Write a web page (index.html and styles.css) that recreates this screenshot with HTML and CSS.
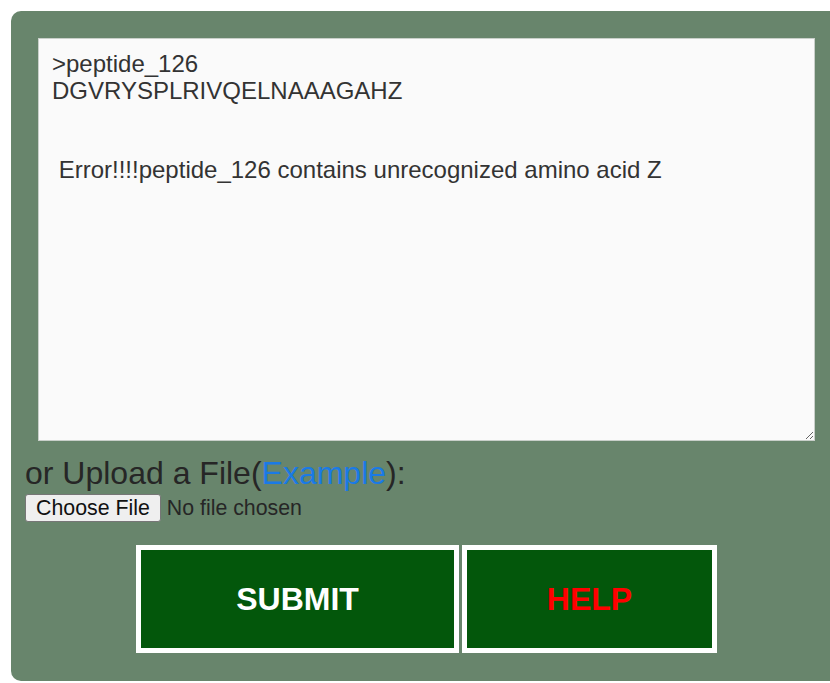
FILE: index.html
```html
<!DOCTYPE html>
<html lang="en">
<head>
<meta charset="utf-8">
<title>Peptide input</title>
<link rel="stylesheet" href="styles.css">
</head>
<body>
<form class="panel">
<textarea class="seq-input" spellcheck="false">&gt;peptide_126
DGVRYSPLRIVQELNAAAGAHZ


 Error!!!!peptide_126 contains unrecognized amino acid Z</textarea>
<div class="upload-label">or Upload a File(<a class="example-link" href="#">Example</a>):</div>
<input class="file-input" type="file">
<div class="actions">
<button class="action-btn submit-btn" type="button">SUBMIT</button>
<button class="action-btn help-btn" type="button">HELP</button>
</div>
</form>
</body>
</html>
```
FILE: styles.css
```css
html {
  overflow: hidden;
}

body {
  margin: 11px 0 0 11px;
  background: #ffffff;
  font-family: "Liberation Sans", Arial, sans-serif;
}

.panel {
  width: 803px;
  padding: 27px 14px 28px;
  background: #68856c;
  border-radius: 10px;
}

.seq-input {
  display: block;
  box-sizing: border-box;
  width: 777px;
  height: 403px;
  margin: 0 13px;
  padding: 12px 13px 11px;
  border: 1px solid #c9cfca;
  background: #fafafa;
  color: #333333;
  font-family: "Liberation Sans", Arial, sans-serif;
  font-size: 24px;
  line-height: 26.6px;
  resize: both;
  outline: none;
}

.upload-label {
  margin-top: 14px;
  font-size: 32px;
  color: #262626;
}

.example-link {
  color: #1a7ae6;
  text-decoration: none;
}

.file-input {
  display: block;
  margin-top: 2px;
  font-family: "Liberation Sans", Arial, sans-serif;
  font-size: 21.33px;
  color: #262626;
}

.file-input::file-selector-button {
  font-family: "Liberation Sans", Arial, sans-serif;
  font-size: 21.33px;
  color: #111111;
  background: #efefef;
  border: 1.5px solid #767676;
  border-radius: 3px;
  padding: 0 10px;
  height: 28px;
  margin-right: 6px;
}

.actions {
  display: flex;
  justify-content: center;
  gap: 3px;
  margin-top: 23px;
}

.action-btn {
  box-sizing: border-box;
  height: 108px;
  border: 5px solid #ffffff;
  background: #03570b;
  font-family: "Liberation Sans", Arial, sans-serif;
  font-weight: bold;
  font-size: 32px;
  padding: 0;
  cursor: pointer;
}

.submit-btn {
  width: 323px;
  color: #ffffff;
}

.help-btn {
  width: 255px;
  color: #ff0000;
}
```
